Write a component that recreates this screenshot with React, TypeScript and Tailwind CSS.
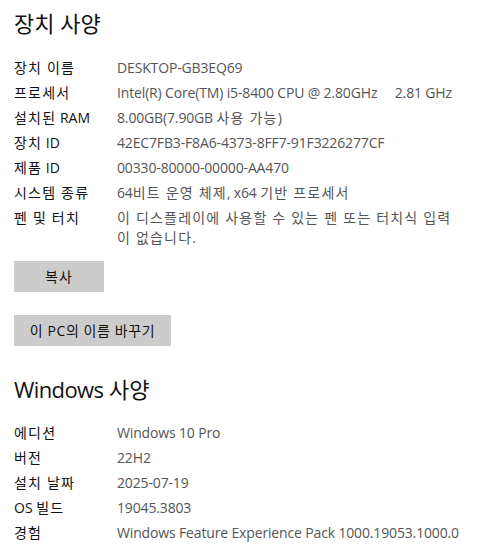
const device: [string, string][] = [
  ["장치 이름", "DESKTOP-GB3EQ69"],
  ["프로세서", "Intel(R) Core(TM) i5-8400 CPU @ 2.80GHz     2.81 GHz"],
  ["설치된 RAM", "8.00GB(7.90GB 사용 가능)"],
  ["장치 ID", "42EC7FB3-F8A6-4373-8FF7-91F3226277CF"],
  ["제품 ID", "00330-80000-00000-AA470"],
  ["시스템 종류", "64비트 운영 체제, x64 기반 프로세서"],
  ["펜 및 터치", "이 디스플레이에 사용할 수 있는 펜 또는 터치식 입력\n이 없습니다."],
];

const windows: [string, string][] = [
  ["에디션", "Windows 10 Pro"],
  ["버전", "22H2"],
  ["설치 날짜", "2025-07-19"],
  ["OS 빌드", "19045.3803"],
  ["경험", "Windows Feature Experience Pack 1000.19053.1000.0"],
];

// Malgun Gothic sets hangul wider than Noto CJK, so loosen the hangul runs
const Ko = ({ text }: { text: string }) => (
  <>
    {text.split(/([가-힣][가-힣 ]*[가-힣]|[가-힣])/).map((part, i) =>
      /[가-힣]/.test(part) ? (
        <span key={i} className="tracking-[1.2px]">{part}</span>
      ) : (
        <span key={i}>{part}</span>
      )
    )}
  </>
);

const Rows = ({ items }: { items: [string, string][] }) => (
  <div className="flex flex-col gap-[5px]">
    {items.map(([k, v]) => (
      <div key={k} className="flex text-[14px] leading-[20px]">
        <div className="w-[103px] shrink-0 text-[#111]"><Ko text={k} /></div>
        <div className="w-[365px] text-[#555] whitespace-pre tracking-[-0.15px]"><Ko text={v} /></div>
      </div>
    ))}
  </div>
);

export default function App() {
  return (
    <div
      className="w-[487px] h-[550px] bg-white overflow-hidden pl-[14px] pt-[8px]"
      style={{ fontFamily: '"Open Sans", "Noto Sans CJK KR", sans-serif' }}
    >
      <h1 className="text-[22px] leading-[30px] text-[#111]">장치 사양</h1>
      <div className="mt-[20px]">
        <Rows items={device} />
      </div>
      <button className="mt-[13px] w-[90px] h-[31px] bg-[#cccccc] text-[14px] text-[#111] tracking-[1px]">복사</button>
      <div>
        <button className="mt-[23px] w-[157px] h-[31px] bg-[#cccccc] text-[14px] text-[#111] tracking-[0.6px]">이 PC의 이름 바꾸기</button>
      </div>
      <h1 className="mt-[28px] text-[22px] leading-[30px] text-[#111]">
        <span className="tracking-[-0.6px]">Windows</span> 사양
      </h1>
      <div className="mt-[19px]">
        <Rows items={windows} />
      </div>
    </div>
  );
}
